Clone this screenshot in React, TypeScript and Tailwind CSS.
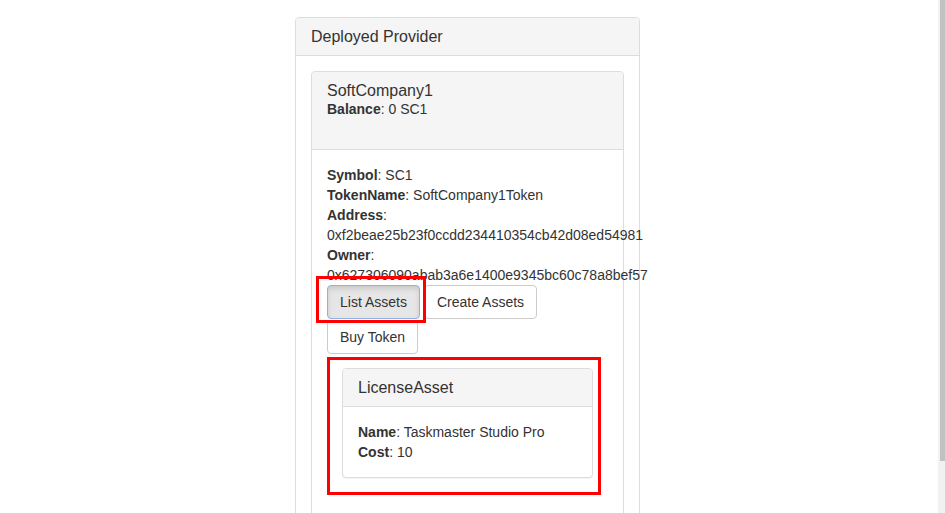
export default function App() {
  return (
    <div className="relative min-h-[560px] bg-white text-[14px] leading-[20px] text-[#333] [font-family:'Liberation_Sans',Arial,sans-serif]">
      <div className="ml-[295px] w-[345px] pt-[17px]">
        {/* Outer panel */}
        <div className="rounded-[4px] border border-[#ddd] bg-white">
          <div className="rounded-t-[3px] border-b border-[#ddd] bg-[#f5f5f5] px-[15px] py-[10px]">
            <h3 className="text-[16px] leading-[17px]">Deployed Provider</h3>
          </div>
          <div className="p-[15px] pb-[40px]">
            {/* Inner provider panel */}
            <div className="rounded-[4px] border border-[#ddd] bg-white">
              <div className="rounded-t-[3px] border-b border-[#ddd] bg-[#f5f5f5] px-[15px] py-[10px]">
                <h3 className="text-[16px] leading-[17px]">SoftCompany1</h3>
                <div>
                  <b>Balance</b>: 0 SC1
                </div>
                <div className="h-[20px]" />
              </div>
              <div className="p-[15px] pb-[40px]">
                <div>
                  <b>Symbol</b>: SC1
                </div>
                <div>
                  <b>TokenName</b>: SoftCompany1Token
                </div>
                <div>
                  <b>Address</b>:
                </div>
                <div className="whitespace-nowrap">0xf2beae25b23f0ccdd234410354cb42d08ed54981</div>
                <div>
                  <b>Owner</b>:
                </div>
                <div className="whitespace-nowrap">0x627306090abab3a6e1400e9345bc60c78a8bef57</div>

                <div className="flex flex-wrap gap-x-[4px] gap-y-[1px]">
                  <button className="h-[34px] rounded-[4px] border border-[#8db2e3] bg-[#e6e6e6] px-[12px] shadow-[inset_0_3px_5px_rgba(0,0,0,0.125)]">
                    List Assets
                  </button>
                  <button className="h-[34px] rounded-[4px] border border-[#ccc] bg-white px-[12px]">
                    Create Assets
                  </button>
                  <button className="h-[34px] rounded-[4px] border border-[#ccc] bg-white px-[12px]">
                    Buy Token
                  </button>
                </div>

                {/* Asset panel */}
                <div className="ml-[15px] mt-[14px] w-[251px] rounded-[4px] border border-[#ddd] bg-white shadow-[0_1px_1px_rgba(0,0,0,0.05)]">
                  <div className="rounded-t-[3px] border-b border-[#ddd] bg-[#f5f5f5] px-[15px] py-[10px]">
                    <h3 className="text-[16px] leading-[17px]">LicenseAsset</h3>
                  </div>
                  <div className="p-[15px]">
                    <div>
                      <b>Name</b>: Taskmaster Studio Pro
                    </div>
                    <div>
                      <b>Cost</b>: 10
                    </div>
                  </div>
                </div>
              </div>
            </div>
          </div>
        </div>
      </div>

      {/* annotation boxes */}
      <div className="pointer-events-none absolute left-[316px] top-[276px] h-[47px] w-[110px] border-[3px] border-[#f00]" />
      <div className="pointer-events-none absolute left-[327px] top-[357px] h-[138px] w-[274px] border-[3px] border-[#f00]" />

      {/* scrollbar */}
      <div className="fixed right-0 top-0 h-[513px] w-[7px] bg-[#f1f1f1]">
        <div className="absolute right-0 top-0 h-[461px] w-[5px] bg-[#c1c1c1]" />
      </div>
    </div>
  );
}
